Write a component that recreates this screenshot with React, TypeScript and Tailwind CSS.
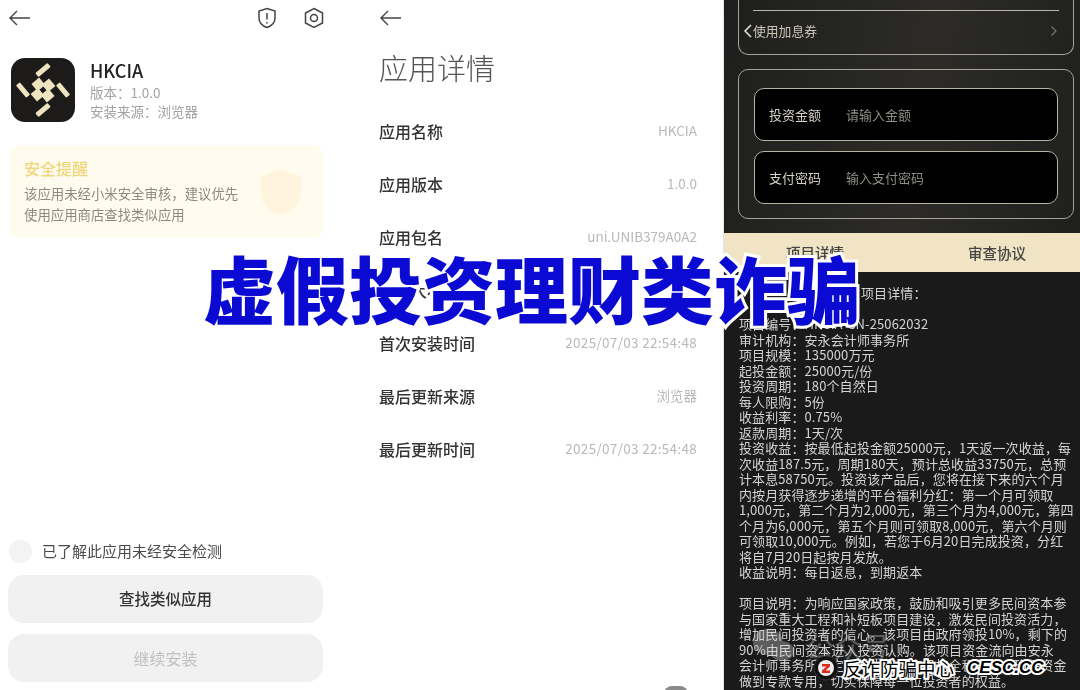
const font = "font-['Noto_Sans_CJK_SC','Noto_Sans',sans-serif]";

const detailRows = [
  { label: "应用名称", value: "HKCIA" },
  { label: "应用版本", value: "1.0.0" },
  { label: "应用包名", value: "uni.UNIB379A0A2" },
  { label: "应用大小", value: "" },
  { label: "首次安装时间", value: "2025/07/03 22:54:48" },
  { label: "最后更新来源", value: "浏览器" },
  { label: "最后更新时间", value: "2025/07/03 22:54:48" },
];

const projectLines = [
  "项目编号\uFF1AHKCIA-CN-25062032",
  "审计机构\uFF1A安永会计师事务所",
  "项目规模\uFF1A135000万元",
  "起投金额\uFF1A25000元/份",
  "投资周期\uFF1A180个自然日",
  "每人限购\uFF1A5份",
  "收益利率\uFF1A0.75%",
  "返款周期\uFF1A1天/次",
  "投资收益\uFF1A按最低起投金额25000元\uFF0C1天返一次收益\uFF0C每",
  "次收益187.5元\uFF0C周期180天\uFF0C预计总收益33750元\uFF0C总预",
  "计本息58750元。投资该产品后\uFF0C您将在接下来的六个月",
  "内按月获得逐步递增的平台福利分红\uFF1A第一个月可领取",
  "1,000元\uFF0C第二个月为2,000元\uFF0C第三个月为4,000元\uFF0C第四",
  "个月为6,000元\uFF0C第五个月则可领取8,000元\uFF0C第六个月则",
  "可领取10,000元。例如\uFF0C若您于6月20日完成投资\uFF0C分红",
  "将自7月20日起按月发放。",
  "收益说明\uFF1A每日返息\uFF0C到期返本",
  " ",
  "项目说明\uFF1A为响应国家政策\uFF0C鼓励和吸引更多民间资本参",
  "与国家重大工程和补短板项目建设\uFF0C激发民间投资活力\uFF0C",
  "增加民间投资者的信心。该项目由政府领投10%\uFF0C剩下的",
  "90%由民间资本进入投资认购。该项目资金流向由安永",
  "会计师事务所审定\uFF0C并由第三方机构全程监管\uFF0C确保资金",
  "做到专款专用\uFF0C切实保障每一位投资者的权益。",
];

const BackArrow = () => (
  <svg width="24" height="18" viewBox="0 0 24 18" fill="none" stroke="#444" strokeWidth="1.4">
    <path d="M22 9H2M9 2 2 9l7 7" />
  </svg>
);

const AppIcon = () => (
  <div className="flex h-[64px] w-[64px] items-center justify-center rounded-[14px] bg-[#1c1b19]">
    <svg width="64" height="64" viewBox="0 0 64 64" fill="#efe4c0">
      <g transform="rotate(-40 32 32)">
        <path d="M27 20h10v7h7v10h-7v7H27v-7h-7V27h7z" />
        <rect x="29.500" y="29.500" width="5" height="5" fill="#1c1b19" />
      </g>
      <rect x="24" y="9.500" width="16" height="5" rx="1" transform="rotate(-40 32 12)" />
      <rect x="24" y="49.500" width="16" height="5" rx="1" transform="rotate(-40 32 52)" />
      <rect x="49.500" y="24" width="5" height="16" rx="1" transform="rotate(-40 52 32)" />
      <rect x="9.500" y="24" width="5" height="16" rx="1" transform="rotate(-40 12 32)" />
    </svg>
  </div>
);

const InputRow = ({ label, hint }: { label: string; hint: string }) => (
  <div className="flex h-[53px] items-center rounded-[10px] border border-[#b5b2a4] bg-black pl-[14px]">
    <span className="w-[77px] text-[13px] text-[#d5d2c8]">{label}</span>
    <span className="text-[13px] text-[#8f8d86]">{hint}</span>
  </div>
);

export default function App() {
  return (
    <div className={`relative flex h-[690px] w-[1080px] overflow-hidden bg-white ${font}`}>
      {/* left: install warning */}
      <div className="flex w-[360px] flex-col pl-2 blur-[0.4px]">
        <div className="flex h-[36px] items-center justify-between pr-[36px]">
          <BackArrow />
          <div className="flex items-center gap-[27px]">
            <svg width="20" height="22" viewBox="0 0 20 22" fill="none" stroke="#444" strokeWidth="1.5">
              <path d="M10 1.500 18 4v7c0 5-3.500 8-8 9.500C5.500 19 2 16 2 11V4z" />
              <path d="M10 6v6.500M10 15v1.500" />
            </svg>
            <svg width="20" height="22" viewBox="0 0 20 22" fill="none" stroke="#444" strokeWidth="1.5">
              <path d="M10 1.500 18.500 6v10L10 20.500 1.500 16V6z" />
              <circle cx="10" cy="11" r="3.500" />
            </svg>
          </div>
        </div>
        <div className="ml-[3px] mt-[22px] flex items-center gap-[15px]">
          <AppIcon />
          <div className="-mt-[2px]">
            <div className="text-[18px] font-medium leading-[26px] text-[#222]">HKCIA</div>
            <div className="text-[13.500px] leading-[19px] text-[#a3a3a3]">{"版本\uFF1A1.0.0"}</div>
            <div className="text-[13.500px] leading-[19px] text-[#a3a3a3]">{"安装来源\uFF1A浏览器"}</div>
          </div>
        </div>
        <div className="relative ml-[2px] mt-[23px] h-[93px] w-[313px] rounded-[10px] bg-[#fffbee] pl-[14px] pt-[12px]">
          <div className="text-[16px] font-medium leading-[22px] text-[#f0d67c]">安全提醒</div>
          <div className="mt-[4px] text-[13.400px] leading-[21px] text-[#8d8b80]">
            {"该应用未经小米安全审核\uFF0C建议优先"}
            <br />
            使用应用商店查找类似应用
          </div>
          <svg className="absolute right-[19px] top-[23px]" width="46" height="48" viewBox="0 0 44 50" fill="#fff4dd">
            <path d="M22 1 43 9v17c0 12-9 19-21 23C10 45 1 38 1 26V9z" />
          </svg>
        </div>
        <div className="mt-[302px] flex items-center gap-[10px] pl-px">
          <div className="h-[23px] w-[23px] rounded-full bg-[#f3f3f3]" />
          <span className="text-[15px] text-[#4a4a4a]">已了解此应用未经安全检测</span>
        </div>
        <div className="mt-[12px] flex h-[48px] w-[315px] items-center justify-center rounded-[16px] bg-[#f1f1f1] text-[15.500px] font-medium text-[#333]">
          查找类似应用
        </div>
        <div className="mt-[11px] flex h-[48px] w-[315px] items-center justify-center rounded-[16px] bg-[#f1f1f1] text-[16px] text-[#c0c0c0]">
          继续安装
        </div>
      </div>

      {/* middle: app details */}
      <div className="relative flex w-[364px] flex-col border-r border-[#e4e4e4] pl-[19px] pr-[26px] blur-[0.4px]">
        <div className="flex h-[36px] items-center">
          <BackArrow />
        </div>
        <div className="mt-[9px] text-[29px] font-light leading-[44px] text-[#555]">应用详情</div>
        <div className="mt-[15px] flex flex-col">
          {detailRows.map((row) => (
            <div key={row.label} className="flex h-[53px] items-center justify-between">
              <span className="text-[16px] font-medium text-[#333]">{row.label}</span>
              <span
                className={
                  row.value.startsWith("2025")
                    ? "text-[13.500px] tracking-[0.3px] text-[#b9b9b9]"
                    : "text-[13.500px] text-[#b9b9b9]"
                }
              >
                {row.value}
              </span>
            </div>
          ))}
        </div>
        <div className="absolute bottom-[-12px] right-[35px] h-[16px] w-[24px] rounded-full bg-[#8a8a8a]" />
      </div>

      {/* right: investment page */}
      <div className="flex flex-1 flex-col overflow-hidden bg-[#1a1a1a] blur-[0.4px]">
        <div className="shrink-0 bg-[linear-gradient(100deg,#1e1e1c,#2c2b28_55%,#1f1f1d)] pb-[14px]">
          <div className="ml-[14px] mr-[6px] h-[55px] rounded-b-[10px] border border-t-0 border-[#a5a397] px-[14px] pt-[10px]">
            <div className="h-px bg-[#b8b6aa]" />
            <div className="mt-[10px] flex items-center justify-between pr-[1px] text-[#c9c6b8]">
              <span className="-ml-[10px] flex items-center text-[12.800px]">
                <svg width="10" height="16" viewBox="0 0 10 16" fill="none" stroke="#e5e5e0" strokeWidth="1.500">
                  <path d="M8 2 2 8l6 6" />
                </svg>
                使用加息券
              </span>
              <svg width="8" height="12" viewBox="0 0 8 12" fill="none" stroke="#77756c" strokeWidth="1.200">
                <path d="m1.500 1.500 4.500 4.500-4.500 4.500" />
              </svg>
            </div>
          </div>
          <div className="ml-[14px] mr-[6px] mt-[14px] flex h-[150px] flex-col gap-[10px] rounded-[10px] border border-[#a5a397] px-[15px] pt-[18px]">
            <InputRow label="投资金额" hint="请输入金额" />
            <InputRow label="支付密码" hint="输入支付密码" />
          </div>
        </div>
        <div className="flex h-[39px] shrink-0 items-center bg-[#f0e4c4] text-[14.500px] font-medium text-[#444]">
          <span className="w-[182px] text-center">项目详情</span>
          <span className="flex-1 pl-[8px] text-center">审查协议</span>
        </div>
        <div className="whitespace-pre pl-[15px] pt-[13px] text-[13px] leading-[15.500px] tracking-[0.1px] text-[#d4d4d4]">
          <div className="pl-[122px]">{"项目详情\uFF1A"}</div>
          <div>&nbsp;</div>
          {projectLines.map((line, i) => (
            <div key={i}>{line}</div>
          ))}
        </div>
      </div>

      {/* faint account watermark */}
      <div className="pointer-events-none absolute bottom-[26px] left-[752px] flex items-center gap-[12px] opacity-35">
        <svg width="42" height="36" viewBox="0 0 42 36" fill="#d8d8d8">
          <ellipse cx="16" cy="14" rx="15" ry="13" />
          <ellipse cx="30" cy="23" rx="12" ry="10" />
        </svg>
        <span className="text-[28px] leading-[36px] text-[#d8d8d8]">公众号</span>
      </div>

      {/* headline across the panels */}
      <div className="absolute left-[203px] top-[244px] whitespace-nowrap text-[73px] font-black leading-[84px] text-[#0a0ad2] [-webkit-text-stroke:6px_white] [paint-order:stroke_fill]">
        虚假投资理财类诈骗
      </div>

      {/* source badge */}
      <div className="absolute bottom-[9px] left-[813px] flex items-center gap-[4px]">
        <svg width="26" height="26" viewBox="0 0 26 26">
          <circle cx="13" cy="13" r="12" fill="#111" stroke="#333" strokeWidth="1" />
          <circle cx="13" cy="13" r="8" fill="#eee" />
          <path d="M9 9h8v2.500l-4.500 4H17V18H9v-2.500l4.500-4H9z" fill="#d92a1c" />
        </svg>
        <span className="text-[18.500px] leading-[26px] text-black [-webkit-text-stroke:4px_white] [paint-order:stroke_fill]">
          反诈防骗中心
        </span>
        <span className="ml-[9px] font-['Liberation_Sans',sans-serif] text-[17px] font-bold italic leading-[26px] text-black [-webkit-text-stroke:4px_white] [paint-order:stroke_fill]">
          CESC.CC
        </span>
      </div>
    </div>
  );
}
